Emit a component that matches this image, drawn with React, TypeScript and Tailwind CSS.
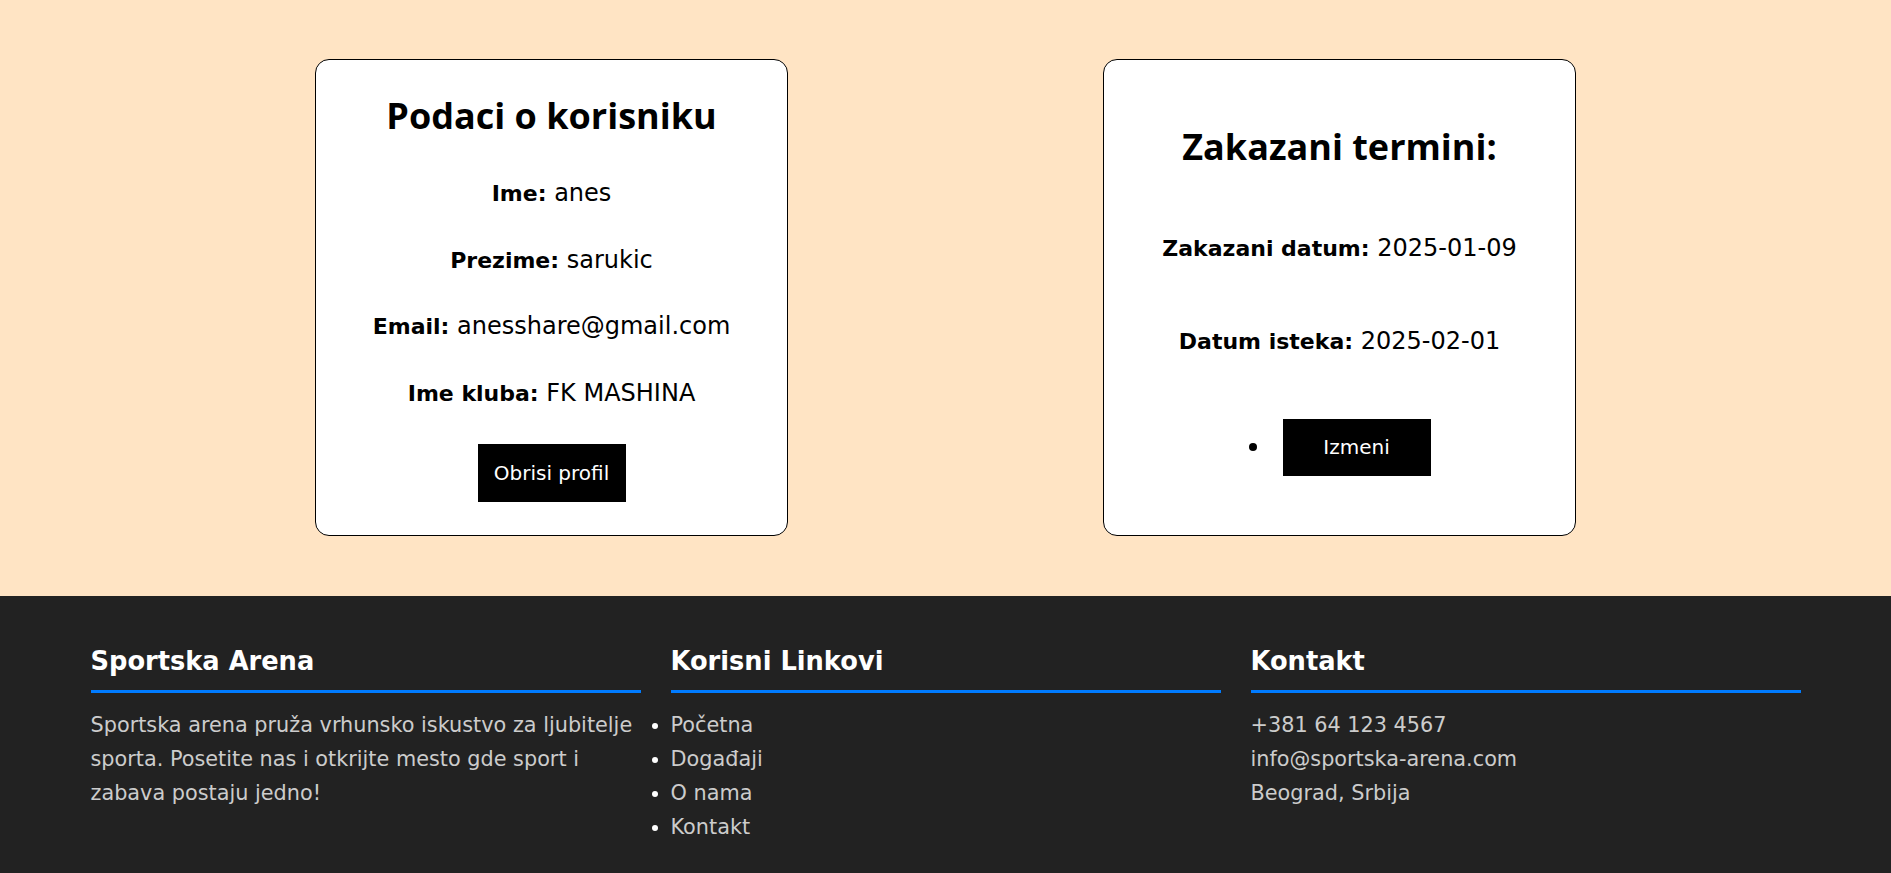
const titleFont = { fontFamily: '"Open Sans", "Noto Sans", sans-serif' };
const bodyFont = { fontFamily: '"DejaVu Sans", "Open Sans", sans-serif' };

const userRows = [
  { label: 'Ime:', value: 'anes' },
  { label: 'Prezime:', value: 'sarukic' },
  { label: 'Email:', value: 'anesshare@gmail.com' },
  { label: 'Ime kluba:', value: 'FK MASHINA' }
];

const links = ['Početna', 'Događaji', 'O nama', 'Kontakt'];

function Row({ label, value }: { label: string; value: string }) {
  return (
    <p className="h-[36px] text-center text-[24px] leading-[36px] text-black">
      <span className="text-[22px] font-bold leading-none">{label}</span> {value}
    </p>
  );
}

function FooterTitle({ children }: { children: string }) {
  return (
    <h3 className="border-b-[3px] border-[#007bff] pb-[13px] text-[25.7px] font-bold leading-[32px] text-white">
      {children}
    </h3>
  );
}

export default function App() {
  return (
    <div className="min-h-screen bg-[#222]" style={bodyFont}>
      <section className="flex justify-evenly bg-[#ffe4c4] pb-[60px] pt-[59px]">
        <div className="flex w-[473px] flex-col items-center rounded-[14px] border border-black bg-white pb-[33px] pt-[34px]">
          <h2 className="text-[36px] font-bold leading-[44px] text-black" style={titleFont}>
            Podaci o korisniku
          </h2>
          <div className="mt-[37px] flex flex-col gap-[30.5px]">
            {userRows.map((r) => (
              <Row key={r.label} label={r.label} value={r.value} />
            ))}
          </div>
          <button className="mt-[33px] h-[58px] w-[148px] bg-black text-[20px] text-white">Obrisi profil</button>
        </div>

        <div className="flex w-[473px] flex-col items-center justify-center rounded-[14px] border border-black bg-white pt-[6px]">
          <h2 className="text-[36px] font-bold leading-[44px] text-black" style={titleFont}>
            Zakazani termini:
          </h2>
          <div className="mt-[61px]">
            <Row label="Zakazani datum:" value="2025-01-09" />
          </div>
          <div className="mt-[57px]">
            <Row label="Datum isteka:" value="2025-02-01" />
          </div>
          <div className="mt-[60px] flex items-center gap-[26px]">
            <span className="h-2 w-2 rounded-full bg-black" />
            <button className="h-[57px] w-[148px] bg-black text-[20px] text-white">Izmeni</button>
          </div>
        </div>
      </section>

      <footer className="bg-[#222] pb-[40px] pt-[49px]">
        <div className="mx-auto grid w-[1710px] grid-cols-3 gap-[30px]">
          <div>
            <FooterTitle>Sportska Arena</FooterTitle>
            <p className="mt-[15px] text-[20.8px] leading-[34px] text-[#cccccc]">
              Sportska arena pruža vrhunsko iskustvo za ljubitelje sporta. Posetite nas i otkrijte mesto gde sport i
              zabava postaju jedno!
            </p>
          </div>
          <div>
            <FooterTitle>Korisni Linkovi</FooterTitle>
            <ul className="mt-[15px] list-outside list-disc text-[20.8px] leading-[34px] text-white">
              {links.map((l) => (
                <li key={l}>
                  <a href="#" className="text-[#cccccc]">
                    {l}
                  </a>
                </li>
              ))}
            </ul>
          </div>
          <div>
            <FooterTitle>Kontakt</FooterTitle>
            <div className="mt-[15px] text-[20.8px] leading-[34px] text-[#cccccc]">
              <p>+381 64 123 4567</p>
              <p>info@sportska-arena.com</p>
              <p>Beograd, Srbija</p>
            </div>
          </div>
        </div>
      </footer>
    </div>
  );
}
